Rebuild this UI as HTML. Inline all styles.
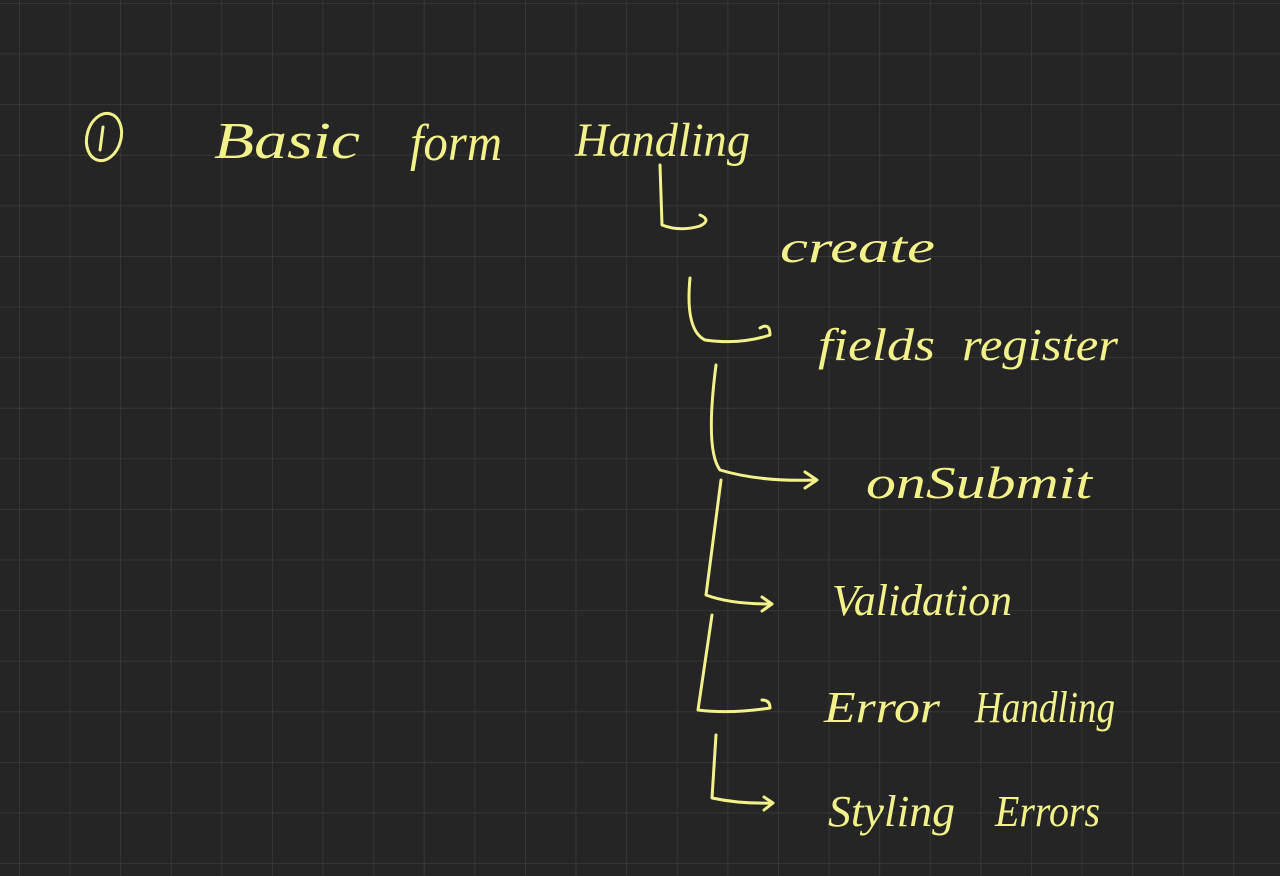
<!DOCTYPE html>
<html><head><meta charset="utf-8"><style>
html,body{margin:0;padding:0;width:1280px;height:876px;overflow:hidden;background:#252525;}
svg{display:block}
text{font-family:"Liberation Serif",serif;font-style:italic;fill:#f3f28a;}
</style></head><body>
<svg width="1280" height="876" viewBox="0 0 1280 876">
<defs>
<pattern id="g" x="19" y="3" width="50.6" height="50.6" patternUnits="userSpaceOnUse">
<path d="M0 0H50.6M0 0V50.6" stroke="#3b3b3b" stroke-width="1.5" fill="none"/>
</pattern>
</defs>
<rect width="1280" height="876" fill="#252525"/>
<rect width="1280" height="876" fill="url(#g)"/>
<g fill="none" stroke="#f3f28a" stroke-width="3" stroke-linecap="round" stroke-linejoin="round">
<ellipse cx="104" cy="137" rx="17" ry="24" transform="rotate(15 104 137)"/>
<path d="M103 127 L100 150"/>
<path d="M660 165 L662 225 Q680 232 700 226 Q712 220 700 215"/>
<path d="M690 278 Q685 330 705 340 Q740 345 770 335 Q770 322 760 328"/>
<path d="M716 365 Q705 450 720 470 Q760 482 815 480 M805 472 L817 480 L805 488"/>
<path d="M721 480 L706 595 Q730 604 770 604 M762 597 L772 604 L762 611"/>
<path d="M712 615 L698 710 Q730 714 770 708 Q770 700 762 700"/>
<path d="M716 735 L712 798 Q740 804 772 803 M764 797 L773 803 L764 810"/>
</g>
<g font-size="52">
<text x="214" y="158" textLength="146" lengthAdjust="spacingAndGlyphs">Basic</text>
<text x="410" y="160" textLength="92" lengthAdjust="spacingAndGlyphs">form</text>
<text x="575" y="156" font-size="48" textLength="175" lengthAdjust="spacingAndGlyphs">Handling</text>
<text x="780" y="262" font-size="44" textLength="155" lengthAdjust="spacingAndGlyphs">create</text>
<text x="818" y="360" font-size="46" textLength="117" lengthAdjust="spacingAndGlyphs">fields</text>
<text x="962" y="360" font-size="46" textLength="156" lengthAdjust="spacingAndGlyphs">register</text>
<text x="866" y="498" font-size="46" textLength="226" lengthAdjust="spacingAndGlyphs">onSubmit</text>
<text x="832" y="615" font-size="44" textLength="180" lengthAdjust="spacingAndGlyphs">Validation</text>
<text x="824" y="722" font-size="44" textLength="116" lengthAdjust="spacingAndGlyphs">Error</text>
<text x="975" y="722" font-size="44" textLength="140" lengthAdjust="spacingAndGlyphs">Handling</text>
<text x="828" y="826" font-size="44" textLength="127" lengthAdjust="spacingAndGlyphs">Styling</text>
<text x="995" y="826" font-size="44" textLength="105" lengthAdjust="spacingAndGlyphs">Errors</text>
</g>
</svg>
</body></html>
